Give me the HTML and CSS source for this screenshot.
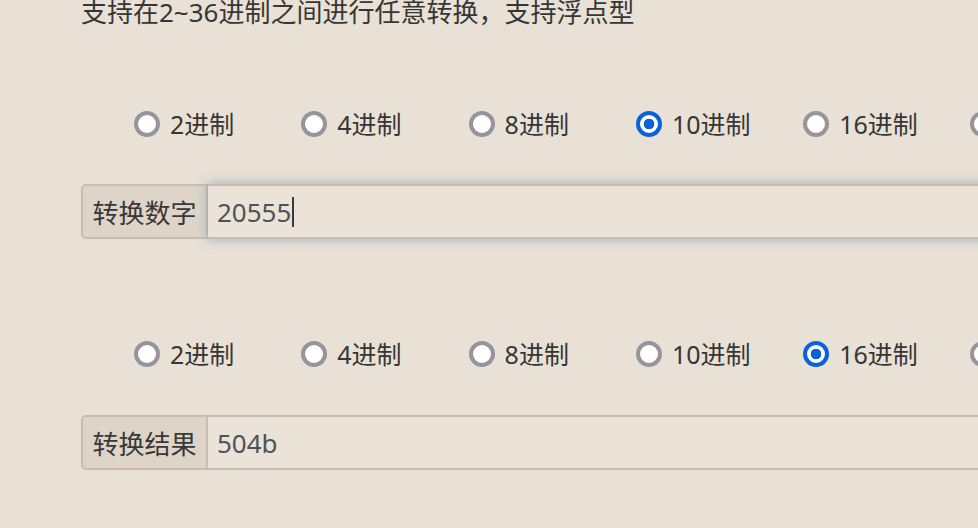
FILE: index.html
```html
<!DOCTYPE html>
<html lang="zh-CN">
<head>
<meta charset="utf-8">
<title>进制转换</title>
<link rel="stylesheet" href="styles.css">
</head>
<body>
<div class="page">
  <p class="intro">支持在2~36进制之间进行任意转换，支持浮点型</p>

  <div class="radios radios-first">
    <label class="radio"><input type="radio" name="from"><span>2进制</span></label>
    <label class="radio"><input type="radio" name="from"><span>4进制</span></label>
    <label class="radio"><input type="radio" name="from"><span>8进制</span></label>
    <label class="radio"><input type="radio" name="from" checked><span>10进制</span></label>
    <label class="radio"><input type="radio" name="from"><span>16进制</span></label>
    <label class="radio"><input type="radio" name="from"><span>32进制</span></label>
  </div>

  <div class="group group-focus">
    <span class="addon">转换数字</span>
    <div class="field"><span class="value">20555</span><span class="caret"></span></div>
  </div>

  <div class="radios radios-second">
    <label class="radio"><input type="radio" name="to"><span>2进制</span></label>
    <label class="radio"><input type="radio" name="to"><span>4进制</span></label>
    <label class="radio"><input type="radio" name="to"><span>8进制</span></label>
    <label class="radio"><input type="radio" name="to"><span>10进制</span></label>
    <label class="radio"><input type="radio" name="to" checked><span>16进制</span></label>
    <label class="radio"><input type="radio" name="to"><span>32进制</span></label>
  </div>

  <div class="group group-result">
    <span class="addon">转换结果</span>
    <div class="field"><span class="value">504b</span></div>
  </div>
</div>
</body>
</html>
```

FILE: styles.css
```css
html, body {
  margin: 0;
  padding: 0;
  background: #e9e1d5;
  overflow: hidden;
}

body {
  width: 978px;
  height: 528px;
  font-family: "Noto Sans", "Noto Sans CJK SC", sans-serif;
  color: #363636;
}

.page {
  padding-left: 81px;
  width: 1000px;
}

.intro {
  margin: -1px 0 0 0;
  font-size: 26px;
  line-height: 26px;
  white-space: nowrap;
}

.radios {
  display: grid;
  grid-template-columns: repeat(6, 167.3px);
  padding-left: 53px;
  height: 34px;
  align-items: center;
}

.radios-first {
  margin-top: 82px;
}

.radios-second {
  margin-top: 98px;
}

.radio {
  display: flex;
  align-items: center;
  gap: 10px;
  font-size: 25px;
  line-height: 34px;
  white-space: nowrap;
}

.radio input {
  appearance: none;
  -webkit-appearance: none;
  margin: 0;
  width: 26px;
  height: 26px;
  border-radius: 50%;
  border: 4px solid #97949e;
  background: #ffffff;
  box-sizing: border-box;
  flex: none;
}

.radio input:checked {
  border-color: #0a62d8;
  background: radial-gradient(circle, #0a62d8 0 5px, #ffffff 5.6px);
}

.group {
  display: flex;
  height: 55px;
  width: 940px;
  margin-top: 43px;
  box-sizing: border-box;
}

.group-result {
  margin-top: 44px;
}

.addon {
  display: flex;
  align-items: center;
  justify-content: center;
  width: 127px;
  box-sizing: border-box;
  border: 2px solid #c8bdaf;
  border-radius: 5px 0 0 5px;
  background: #ded5c8;
  font-size: 26px;
  color: #383838;
  flex: none;
}

.field {
  flex: 1;
  display: flex;
  align-items: center;
  box-sizing: border-box;
  border: 2px solid #c8bdaf;
  border-left: none;
  background: #ebe3d7;
  padding-left: 9px;
  font-size: 26px;
  color: #4e5358;
}

.group-focus .field {
  box-shadow: 0 0 10px 1px rgba(140, 168, 188, 0.75);
}

.caret {
  display: inline-block;
  width: 2px;
  height: 30px;
  background: #3a3a3a;
  margin-left: 1px;
}
```
